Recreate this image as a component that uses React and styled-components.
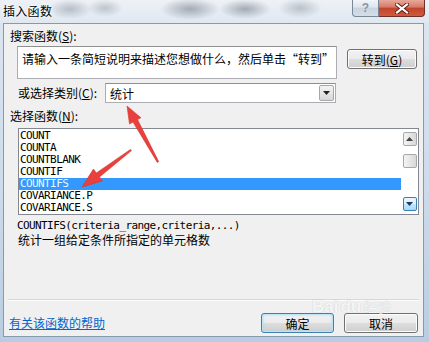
import React from "react";
import styled, { createGlobalStyle } from "styled-components";

const GlobalStyle = createGlobalStyle`
  html, body {
    margin: 0;
    padding: 0;
  }
  body {
    width: 429px;
    height: 342px;
    overflow: hidden;
    background: #d6e1ec;
    font-family: "Noto Sans CJK SC", "Liberation Sans", sans-serif;
  }
`;

const CJK = `"Noto Sans CJK SC", "Liberation Sans", sans-serif`;
const MONO = `"DejaVu Sans Mono", "Liberation Mono", monospace`;

const Window = styled.div`
  position: relative;
  width: 429px;
  height: 342px;
  display: flex;
  flex-direction: column;
  box-sizing: border-box;
  background: linear-gradient(180deg, #dce6f1 0%, #cddbea 55%, #b9cde2 100%);
`;

/* 标题栏：Aero 毛玻璃，背后是模糊的桌面 */
const TitleBar = styled.div`
  height: 23px;
  display: flex;
  align-items: flex-start;
  justify-content: space-between;
  background:
    radial-gradient(ellipse 22px 10px at 70px 9px, rgba(90, 100, 115, 0.35), transparent),
    radial-gradient(ellipse 18px 9px at 105px 8px, rgba(90, 100, 115, 0.3), transparent),
    radial-gradient(ellipse 30px 11px at 190px 9px, rgba(60, 70, 85, 0.4), transparent),
    radial-gradient(ellipse 26px 10px at 245px 9px, rgba(60, 70, 85, 0.4), transparent),
    radial-gradient(ellipse 22px 10px at 300px 8px, rgba(80, 90, 105, 0.3), transparent),
    linear-gradient(180deg, #eef2f7 0%, #dfe7f0 100%);
`;

const Title = styled.div`
  padding-left: 3px;
  font-family: ${CJK};
  font-size: 12px;
  line-height: 22px;
  letter-spacing: 0.3px;
  color: #000;
  text-shadow: 0 0 6px #fff, 0 0 3px #fff;
`;

const CaptionButtons = styled.div`
  display: flex;
  margin-right: 4px;
`;

const CaptionButton = styled.div`
  height: 17px;
  box-sizing: border-box;
  display: flex;
  align-items: center;
  justify-content: center;
  border: 1px solid ${(p) => (p.$close ? "#6e3028" : "#7a8797")};
  border-top: none;
  width: ${(p) => (p.$close ? "46px" : "27px")};
  border-radius: ${(p) => (p.$close ? "0 0 4px 0" : "0 0 0 4px")};
  border-left: ${(p) => (p.$close ? "none" : "1px solid #7a8797")};
  background: ${(p) =>
    p.$close
      ? "linear-gradient(180deg, #e9a99b 0%, #d77a66 45%, #c2432b 50%, #cf5a3e 100%)"
      : "linear-gradient(180deg, #f2f5f9 0%, #dde5ee 45%, #c9d4e0 50%, #d5dee8 100%)"};
  color: #8a96a4;
  font-family: "Liberation Sans", sans-serif;
  font-weight: bold;
  font-size: 12px;
`;

const Client = styled.div`
  flex: 1;
  margin: 0 5px 5px 3px;
  display: flex;
  flex-direction: column;
  border: 1px solid #8799ad;
  background: #f0f0f0;
  box-sizing: border-box;
`;

const SectionLabel = styled.div`
  margin: ${(p) => p.$top}px 0 0 6px;
  font-family: ${CJK};
  font-size: 12px;
  line-height: 14px;
  height: 14px;
  color: #000;
`;

const Row = styled.div`
  display: flex;
  align-items: flex-start;
  margin: ${(p) => p.$top}px 0 0 ${(p) => p.$left}px;
`;

const TextBox = styled.div`
  width: 320px;
  height: 33px;
  box-sizing: border-box;
  border: 1px solid #abadb3;
  border-top-color: #8e8f8f;
  background: #fff;
  padding: 5px 3px 0 4px;
  font-family: ${CJK};
  font-size: 12px;
  line-height: 14px;
  color: #000;
  white-space: nowrap;
  overflow: hidden;
`;

const PushButton = styled.div`
  width: ${(p) => p.$w}px;
  height: 20px;
  margin-top: ${(p) => p.$top || 0}px;
  margin-left: ${(p) => p.$left || 0}px;
  box-sizing: border-box;
  display: flex;
  align-items: center;
  justify-content: center;
  border: 1px solid ${(p) => (p.$default ? "#3c7fb1" : "#707070")};
  border-radius: 3px;
  background: linear-gradient(180deg, #f2f2f2 0%, #ebebeb 48%, #dddddd 52%, #cfcfcf 100%);
  box-shadow: ${(p) =>
    p.$default ? "inset 0 0 0 1px #bfe3f7, inset 0 0 2px 1px #9fd3f1" : "inset 0 0 0 1px #fcfcfc"};
  font-family: ${CJK};
  font-size: 12px;
  color: #000;
`;

const FieldLabel = styled.div`
  width: 87px;
  font-family: ${CJK};
  font-size: 12px;
  line-height: 20px;
  color: #000;
`;

const Select = styled.div`
  width: 231px;
  height: 20px;
  box-sizing: border-box;
  display: flex;
  align-items: center;
  border: 1px solid #abadb3;
  border-top-color: #8e8f8f;
  background: #fff;
  padding-left: 4px;
  font-family: ${CJK};
  font-size: 12px;
  color: #000;
`;

const SelectText = styled.span`
  flex: 1;
`;

const DropButton = styled.div`
  width: 15px;
  height: 16px;
  margin-right: 1px;
  box-sizing: border-box;
  display: flex;
  align-items: center;
  justify-content: center;
  border: 1px solid #a7a7a7;
  border-radius: 2px;
  background: linear-gradient(180deg, #f3f3f3 0%, #e6e6e6 50%, #d6d6d6 100%);
`;

const ListBox = styled.div`
  width: 401px;
  height: 87px;
  margin: 5px 0 0 14px;
  box-sizing: border-box;
  display: flex;
  border: 1px solid #828790;
  background: #fff;
`;

const Items = styled.div`
  flex: 1;
  padding-top: 1px;
  overflow: hidden;
`;

const Item = styled.div`
  height: 12px;
  line-height: 12px;
  padding-left: 1px;
  font-family: ${MONO};
  font-size: 11px;
  letter-spacing: -0.6px;
  color: ${(p) => (p.$selected ? "#e9f6ff" : "#000")};
  background: ${(p) => (p.$selected ? "#3399ff" : "transparent")};
`;

const ScrollBar = styled.div`
  width: 17px;
  display: flex;
  flex-direction: column;
  align-items: center;
  padding: 3px 0 3px;
  box-sizing: border-box;
`;

const ScrollPart = styled.div`
  width: 14px;
  height: 14px;
  margin-top: ${(p) => p.$top || 0}px;
  box-sizing: border-box;
  display: flex;
  align-items: center;
  justify-content: center;
  border: 1px solid ${(p) => (p.$hot ? "#3c7fb1" : "#a8a8a8")};
  border-radius: 2px;
  background: ${(p) =>
    p.$hot
      ? "linear-gradient(180deg, #eaf6fd 0%, #d9f0fc 45%, #bee6fd 55%, #a7d9f5 100%)"
      : "linear-gradient(90deg, #f4f4f4 0%, #e6e6e6 50%, #d8d8d8 100%)"};
`;

const Signature = styled.div`
  margin: 5px 0 0 13px;
  height: 12px;
  line-height: 12px;
  font-family: ${MONO};
  font-size: 11px;
  letter-spacing: -0.6px;
  color: #000;
  white-space: nowrap;
`;

const Description = styled.div`
  margin: 1px 0 0 14px;
  font-family: ${CJK};
  font-size: 12px;
  line-height: 14px;
  color: #000;
`;

const Spacer = styled.div`
  flex: 1;
`;

const Separator = styled.div`
  margin: 0 4px;
  border-top: 1px solid #d5d9de;
  border-bottom: 1px solid #fbfbfb;
`;

const Footer = styled.div`
  display: flex;
  align-items: center;
  margin: 12px 5px 3px 5px;
`;

const HelpLink = styled.a`
  flex: 1;
  font-family: ${CJK};
  font-size: 12px;
  line-height: 14px;
  color: #0066cc;
  text-decoration: underline;
  cursor: pointer;
`;

const Overlay = styled.svg`
  position: absolute;
  left: 0;
  top: 0;
  pointer-events: none;
`;

const Watermark = styled.div`
  position: absolute;
  left: 312px;
  top: 296px;
  display: flex;
  align-items: baseline;
  gap: 2px;
  font-family: "Liberation Sans", sans-serif;
  font-weight: bold;
  font-size: 17px;
  color: rgba(255, 255, 255, 0.85);
  text-shadow: 0 0 1px rgba(120, 130, 140, 0.45);
  pointer-events: none;
`;

const WatermarkCjk = styled.span`
  font-family: ${CJK};
  font-size: 14px;
  font-weight: normal;
`;

const functions = [
  "COUNT",
  "COUNTA",
  "COUNTBLANK",
  "COUNTIF",
  "COUNTIFS",
  "COVARIANCE.P",
  "COVARIANCE.S",
];

function Triangle({ up, color = "#222" }) {
  return (
    <svg width="7" height="4" viewBox="0 0 7 4">
      <path d={up ? "M0 4 L3.5 0 L7 4 Z" : "M0 0 L7 0 L3.5 4 Z"} fill={color} />
    </svg>
  );
}

// 红色箭头（截图上的标注）
function Arrow({ tail, tip, head = 16, half = 6, tailW = 0.8, baseW = 2.6 }) {
  const dx = tip[0] - tail[0];
  const dy = tip[1] - tail[1];
  const len = Math.hypot(dx, dy);
  const ux = dx / len;
  const uy = dy / len;
  const px = -uy;
  const py = ux;
  const bx = tip[0] - ux * head;
  const by = tip[1] - uy * head;
  const pts = [
    [tail[0] + px * tailW, tail[1] + py * tailW],
    [bx + px * baseW, by + py * baseW],
    [bx + px * half, by + py * half],
    tip,
    [bx - px * half, by - py * half],
    [bx - px * baseW, by - py * baseW],
    [tail[0] - px * tailW, tail[1] - py * tailW],
  ];
  return (
    <polygon
      points={pts.map((p) => p.map((v) => v.toFixed(1)).join(",")).join(" ")}
      fill="#e8403c"
      stroke="#d93431"
      strokeWidth="0.6"
      strokeLinejoin="round"
    />
  );
}

export default function App() {
  return (
    <>
      <GlobalStyle />
      <Window>
        <TitleBar>
          <Title>插入函数</Title>
          <CaptionButtons>
            <CaptionButton>?</CaptionButton>
            <CaptionButton $close>
              <svg width="14" height="11" viewBox="0 0 14 11">
                <path d="M2 1.5 L12 9.5 M12 1.5 L2 9.5" stroke="#5a1c14" strokeWidth="4" strokeLinecap="square" />
                <path d="M2 1.5 L12 9.5 M12 1.5 L2 9.5" stroke="#ffffff" strokeWidth="2.2" strokeLinecap="square" />
              </svg>
            </CaptionButton>
          </CaptionButtons>
        </TitleBar>

        <Client>
          <SectionLabel $top={5}>
            搜索函数(<u>S</u>):
          </SectionLabel>
          <Row $top={3} $left={13}>
            <TextBox>请输入一条简短说明来描述您想做什么，然后单击“转到”</TextBox>
            <PushButton $w={70} $top={3} $left={10}>
              转到(<u>G</u>)
            </PushButton>
          </Row>

          <Row $top={4} $left={14}>
            <FieldLabel>
              或选择类别(<u>C</u>):
            </FieldLabel>
            <Select>
              <SelectText>统计</SelectText>
              <DropButton>
                <Triangle />
              </DropButton>
            </Select>
          </Row>

          <SectionLabel $top={6}>
            选择函数(<u>N</u>):
          </SectionLabel>
          <ListBox>
            <Items>
              {functions.map((name) => (
                <Item key={name} $selected={name === "COUNTIFS"}>
                  {name}
                </Item>
              ))}
            </Items>
            <ScrollBar>
              <ScrollPart>
                <Triangle up color="#444" />
              </ScrollPart>
              <ScrollPart $top={8} />
              <Spacer />
              <ScrollPart $hot>
                <Triangle color="#1d3a5a" />
              </ScrollPart>
            </ScrollBar>
          </ListBox>

          <Signature>COUNTIFS(criteria_range,criteria,...)</Signature>
          <Description>统计一组给定条件所指定的单元格数</Description>

          <Spacer />
          <Separator />
          <Footer>
            <HelpLink>有关该函数的帮助</HelpLink>
            <PushButton $w={73} $default>
              确定
            </PushButton>
            <PushButton $w={74} $left={10}>
              取消
            </PushButton>
          </Footer>
        </Client>

        <Watermark>
          Bai<span>du</span>
          <WatermarkCjk>经验</WatermarkCjk>
        </Watermark>

        <Overlay width="429" height="342" viewBox="0 0 429 342">
          <Arrow tail={[158, 162]} tip={[127, 106]} head={17} half={6.5} />
          <Arrow tail={[131, 150]} tip={[82, 187]} head={20} half={7.5} />
        </Overlay>
      </Window>
    </>
  );
}
